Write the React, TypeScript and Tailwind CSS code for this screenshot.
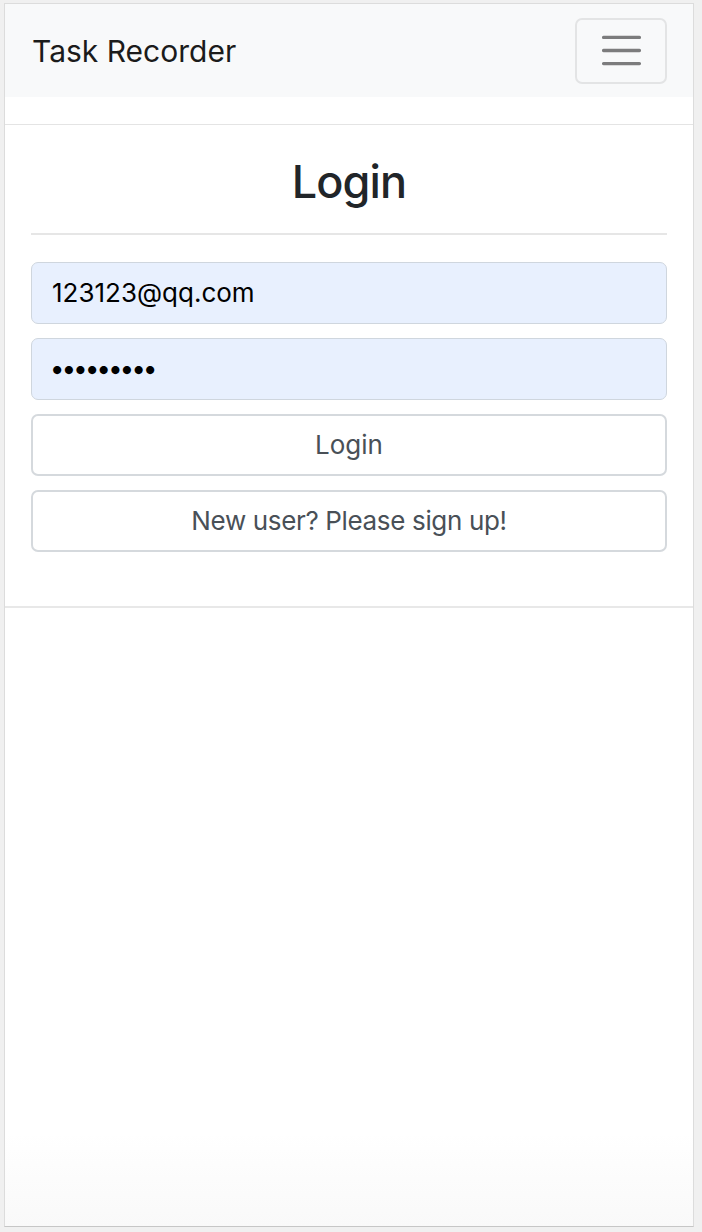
import React from "react";

export default function App() {
  const font = { fontFamily: 'Inter, "Noto Sans", sans-serif' };
  return (
    <div className="min-h-[1232px] bg-[#f0f0f0] pt-[3px] pl-[4px] pr-[8px]" style={font}>
      <div className="h-[1224px] w-[690px] border-l border-t border-r border-[#dcdcdc] border-b border-b-[#c6c6c6] bg-white flex flex-col">
        <nav className="h-[93px] bg-[#f8f9fa] flex items-center justify-between pl-[27px] pr-[26px]">
          <span className="text-[30px] leading-none text-[#1b1b1b] tracking-[0px]">Task Recorder</span>
          <button className="w-[92px] h-[66px] rounded-[7px] border-2 border-[#e3e4e5] flex items-center justify-center">
            <svg width="49" height="49" viewBox="0 0 30 30">
              <path d="M4 7h22M4 15h22M4 23h22" stroke="rgba(0,0,0,0.5)" strokeWidth="2" strokeLinecap="round" strokeMiterlimit="10" />
            </svg>
          </button>
        </nav>
        <div className="h-[27px]" />
        <div className="border-t border-[#e4e4e4] px-[26px]">
          <div className="h-[108px] flex items-center justify-center pt-[4px]">
            <h2 className="text-[45px] font-medium leading-none text-[#212529] tracking-[-0.9px]">Login</h2>
          </div>
          <div className="border-t-2 border-[#e6e6e6]" />
          <div className="pt-[27px] flex flex-col gap-[14px]">
            <div className="h-[62px] rounded-[7px] border border-[#cfd6de] bg-[#e8f0fe] flex items-center px-[20px]">
              <span className="text-[26px] text-black leading-none">123123@qq.com</span>
            </div>
            <div className="h-[62px] rounded-[7px] border border-[#cfd6de] bg-[#e8f0fe] flex items-center px-[19px]">
              <span className="text-[26px] text-black leading-none font-bold tracking-[-0.7px]">•••••••••</span>
            </div>
            <button className="h-[62px] rounded-[7px] border-2 border-[#d5d9dd] bg-white flex items-center justify-center">
              <span className="text-[26px] text-[#495057] leading-none">Login</span>
            </button>
            <button className="h-[62px] rounded-[7px] border-2 border-[#d5d9dd] bg-white flex items-center justify-center">
              <span className="text-[26px] text-[#495057] leading-none tracking-[-0.35px]">New user? Please sign up!</span>
            </button>
          </div>
          <div className="h-[54px]" />
        </div>
        <div className="border-t-2 border-[#e8e8e8]" />
        <div className="flex-1 bg-gradient-to-b from-white from-85% to-[#f9f9f9]" />
      </div>
    </div>
  );
}
